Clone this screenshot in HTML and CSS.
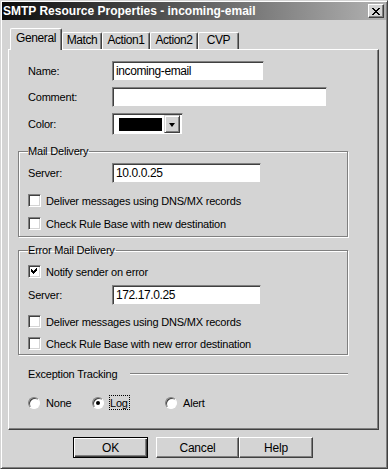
FILE: index.html
```html
<!DOCTYPE html>
<html lang="en">
  <head>
    <meta charset="UTF-8" />
    <title>SMTP Resource Properties</title>
    <link rel="stylesheet" href="styles.css">
  </head>

  <body>
    <div class="window">
      <div class="titlebar">
        <span class="title">SMTP Resource Properties - incoming-email</span>
        <span class="close">
          <svg width="8" height="7" viewBox="0 0 8 7">
            <path d="M0 0h2v1h1v1h2v-1h1v-1h2v1h-1v1h-1v1h-1v1h1v1h1v1h1v1h-2v-1h-1v-1h-2v1h-1v1h-2v-1h1v-1h1v-1h1v-1h-1v-1h-1v-1h-1z" fill="#000"/>
          </svg>
        </span>
      </div>

      <div class="tabs">
        <div class="tab active">General</div>
        <div class="tab t-match">Match</div>
        <div class="tab t-action">Action1</div>
        <div class="tab t-action">Action2</div>
        <div class="tab t-cvp">CVP</div>
      </div>

      <div class="panel">
        <div class="row first">
          <label>Name:</label>
          <div class="field name">incoming-email</div>
        </div>
        <div class="row">
          <label>Comment:</label>
          <div class="field comment"></div>
        </div>
        <div class="row">
          <label>Color:</label>
          <div class="combo">
            <span class="swatch"></span>
            <span class="drop"><span class="arrow"></span></span>
          </div>
        </div>

        <fieldset class="group mail">
          <legend>Mail Delivery</legend>
          <div class="row top">
            <label>Server:</label>
            <div class="field server">10.0.0.25</div>
          </div>
          <div class="check c1"><span class="box"></span>Deliver messages using DNS/MX records</div>
          <div class="check c2"><span class="box"></span>Check Rule Base with new destination</div>
        </fieldset>

        <fieldset class="group error">
          <legend>Error Mail Delivery</legend>
          <div class="check notify">
            <span class="box">
              <svg width="7" height="7" viewBox="0 0 7 7">
                <path d="M6 0v3h-1v1h-1v1h-1v1h-1v-1h-1v-1h-1v-3h1v1h1v1h1v-1h1v-1h1v-1z" fill="#000"/>
              </svg>
            </span>Notify sender on error
          </div>
          <div class="row srv2">
            <label>Server:</label>
            <div class="field server">172.17.0.25</div>
          </div>
          <div class="check c3"><span class="box"></span>Deliver messages using DNS/MX records</div>
          <div class="check c4"><span class="box"></span>Check Rule Base with new error destination</div>
        </fieldset>

        <div class="tracking">
          <span>Exception Tracking</span>
          <span class="rule"></span>
        </div>

        <div class="radios">
          <div class="opt opt-none"><span class="radio"></span>None</div>
          <div class="opt opt-log"><span class="radio on"></span><span class="focus">Log</span></div>
          <div class="opt"><span class="radio"></span>Alert</div>
        </div>
      </div>

      <div class="buttons">
        <button class="btn default">OK</button>
        <button class="btn cancel">Cancel</button>
        <button class="btn help">Help</button>
      </div>
    </div>
  </body>
</html>
```

FILE: styles.css
```css
body {
  margin: 0;
  background-color: #d4d4d4;
  font-family: "Liberation Sans", Arial, sans-serif;
  font-size: 11px;
  letter-spacing: -0.2px;
  color: #000;
}

.window {
  width: 388px;
  height: 469px;
  box-sizing: border-box;
  border: 1px solid;
  border-color: #d4d4d4 #404040 #404040 #d4d4d4;
  box-shadow: inset 1px 1px #fff, inset -1px -1px #808080;
  padding: 1px 1px;
  background-color: #d4d4d4;
}

.titlebar {
  height: 18px;
  display: flex;
  align-items: center;
  justify-content: space-between;
  background: linear-gradient(to right, #0c0c0c, #b2b2b2);
  padding-left: 1px;
}

.title {
  color: #fff;
  font-weight: bold;
  font-size: 12px;
  letter-spacing: 0;
}

.close {
  width: 16px;
  height: 14px;
  box-sizing: border-box;
  margin-right: 2px;
  background-color: #d4d4d4;
  border: 1px solid;
  border-color: #fff #404040 #404040 #fff;
  box-shadow: inset -1px -1px #808080;
  display: flex;
  align-items: center;
  justify-content: center;
}

.tabs {
  display: flex;
  align-items: flex-end;
  height: 21px;
  margin-top: 8px;
  margin-left: 8px;
}

.tab {
  height: 17px;
  box-sizing: border-box;
  border: 1px solid;
  border-bottom: 0;
  border-color: #fff #404040 #404040 #fff;
  border-radius: 2px 2px 0 0;
  box-shadow: inset -1px 0 #808080;
  text-align: center;
  line-height: 15px;
  font-size: 12px;
  letter-spacing: -0.4px;
  background-color: #d4d4d4;
}

.tab.active {
  width: 52px;
  height: 22px;
  margin-bottom: -1px;
  position: relative;
  z-index: 1;
  line-height: 18px;
}

.t-match {
  width: 40px;
}

.t-action {
  width: 48px;
}

.t-cvp {
  width: 41px;
}

.panel {
  width: 371px;
  height: 381px;
  box-sizing: border-box;
  margin-left: 6px;
  border: 1px solid;
  border-color: #fff #404040 #404040 #fff;
  box-shadow: inset -1px -1px #808080;
  padding: 11px 0 0 9px;
}

.row {
  display: flex;
  align-items: center;
  padding-left: 10px;
  margin-top: 6px;
}

.row.first {
  margin-top: 0;
}

label {
  width: 84px;
}

.field {
  height: 20px;
  box-sizing: border-box;
  border: 1px solid;
  border-color: #808080 #d4d4d4 #d4d4d4 #808080;
  box-shadow: inset 1px 1px #404040, inset -1px -1px #fff;
  background-color: #fff;
  padding: 2px 0 0 3px;
  font-size: 12px;
  letter-spacing: -0.4px;
  line-height: 15px;
}

.name {
  width: 152px;
}

.comment {
  width: 215px;
}

.server {
  width: 149px;
}

.combo {
  width: 71px;
  height: 22px;
  box-sizing: border-box;
  border: 1px solid;
  border-color: #808080 #d4d4d4 #d4d4d4 #808080;
  box-shadow: inset 1px 1px #404040, inset -1px -1px #fff;
  background-color: #fff;
  display: flex;
  align-items: center;
  padding: 2px;
}

.swatch {
  width: 43px;
  height: 13px;
  margin-left: 4px;
  background-color: #000;
}

.drop {
  width: 16px;
  height: 18px;
  box-sizing: border-box;
  margin-left: auto;
  background-color: #d4d4d4;
  border: 1px solid;
  border-color: #d4d4d4 #404040 #404040 #d4d4d4;
  box-shadow: inset 1px 1px #fff, inset -1px -1px #808080;
  display: flex;
  align-items: center;
  justify-content: center;
}

.arrow {
  width: 0;
  height: 0;
  border-left: 3.5px solid transparent;
  border-right: 3.5px solid transparent;
  border-top: 4px solid #000;
  margin-top: 1px;
}

.group {
  width: 330px;
  box-sizing: border-box;
  margin: 10px 0 0 0;
  padding: 5px 0 6px 0;
  border: 1px solid #808080;
  box-shadow: 1px 1px 0 #fff, inset 1px 1px 0 #fff;
  min-width: 0;
}

.group legend {
  margin-left: 9px;
  padding: 0 1px 0 0;
  line-height: 13px;
}

.group .row {
  padding-left: 9px;
}

.group .row.top {
  margin-top: 0;
}

.check {
  display: flex;
  align-items: center;
  height: 13px;
  padding-left: 9px;
}

.box {
  width: 13px;
  height: 13px;
  box-sizing: border-box;
  margin-right: 5px;
  border: 1px solid;
  border-color: #808080 #fff #fff #808080;
  box-shadow: inset 1px 1px #404040, inset -1px -1px #d4d4d4;
  background-color: #fff;
  display: flex;
  align-items: center;
  justify-content: center;
}

.c1 {
  margin-top: 11px;
}

.c2 {
  margin-top: 10px;
}

.error {
  margin-top: 7px;
  padding-top: 8px;
  padding-bottom: 4px;
}

.srv2 {
  margin-top: 7px;
}

.c3 {
  margin-top: 10px;
}

.c4 {
  margin-top: 9px;
}

.tracking {
  display: flex;
  align-items: center;
  width: 320px;
  padding-left: 10px;
  margin-top: 12px;
  height: 13px;
}

.rule {
  flex: 1;
  height: 0;
  margin-left: 13px;
  border-top: 1px solid #808080;
  border-bottom: 1px solid #fff;
}

.radios {
  display: flex;
  align-items: center;
  padding-left: 10px;
  margin-top: 15px;
}

.opt {
  display: flex;
  align-items: center;
}

.opt-none {
  width: 64px;
}

.opt-log {
  width: 73px;
}

.radio {
  width: 12px;
  height: 12px;
  box-sizing: border-box;
  margin-right: 6px;
  border-radius: 50%;
  border: 1px solid;
  border-color: #808080 #fff #fff #808080;
  box-shadow: inset 1px 1px #404040;
  background-color: #fff;
  display: flex;
  align-items: center;
  justify-content: center;
}

.radio.on::after {
  content: "";
  width: 4px;
  height: 4px;
  border-radius: 50%;
  background-color: #000;
}

.focus {
  border: 1px dotted #000;
  padding: 1px 1px 0 0;
  margin-left: -1px;
}

.buttons {
  display: flex;
  margin-top: 7px;
  padding-left: 71px;
}

.btn {
  height: 21px;
  box-sizing: border-box;
  font-family: "Liberation Sans", Arial, sans-serif;
  font-size: 12px;
  letter-spacing: -0.2px;
  background-color: #d4d4d4;
  border: 1px solid;
  border-color: #fff #404040 #404040 #fff;
  box-shadow: inset -1px -1px #808080;
  padding: 0;
  color: #000;
}

.btn.default {
  width: 75px;
  border-color: #000;
  box-shadow: inset 1px 1px #fff, inset -1px -1px #404040, inset -2px -2px #808080;
}

.cancel {
  width: 83px;
  margin-left: 8px;
}

.help {
  width: 74px;
}
```
